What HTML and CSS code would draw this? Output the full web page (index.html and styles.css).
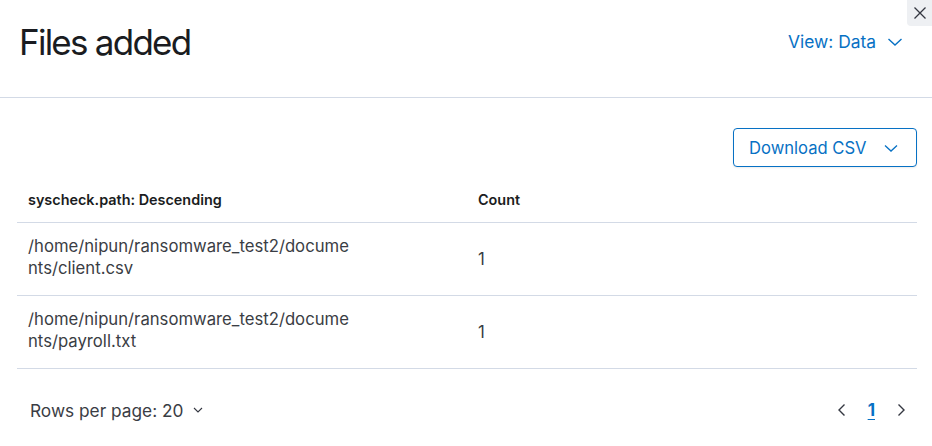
FILE: index.html
```html
<!DOCTYPE html>
<html>
<head>
<meta charset="utf-8">
<link rel="stylesheet" href="styles.css">
</head>
<body>
<div class="flyout">
  <button class="close" aria-label="Close">
    <svg width="14" height="14" viewBox="0 0 14 14"><path d="M1.5 1.5 L12.5 12.5 M12.5 1.5 L1.5 12.5" stroke="#343741" stroke-width="1.3" fill="none"/></svg>
  </button>
  <header class="head">
    <h1 class="title">Files added</h1>
    <div class="view">View: Data
      <svg class="chev" width="16" height="16" viewBox="0 0 16 16"><path d="M1.5 5 L8 11 L14.5 5" stroke="#0771c4" stroke-width="1.4" fill="none"/></svg>
    </div>
  </header>
  <main class="body">
    <div class="toolbar">
      <button class="dl">Download CSV
        <svg class="chev" width="14" height="14" viewBox="0 0 14 14"><path d="M1 4.5 L7 10 L13 4.5" stroke="#0771c4" stroke-width="1.3" fill="none"/></svg>
      </button>
    </div>
    <table class="tbl">
      <thead>
        <tr><th class="c1">syscheck.path: Descending</th><th class="c2">Count</th><th class="c3"></th></tr>
      </thead>
      <tbody>
        <tr><td class="c1"><div class="path">/home/nipun/ransomware_test2/documents/client.csv</div></td><td class="c2">1</td><td class="c3"></td></tr>
        <tr><td class="c1"><div class="path">/home/nipun/ransomware_test2/documents/payroll.txt</div></td><td class="c2">1</td><td class="c3"></td></tr>
      </tbody>
    </table>
    <div class="pager">
      <div class="rpp">Rows per page: 20
        <svg width="12" height="12" viewBox="0 0 12 12"><path d="M2 4 L6 8 L10 4" stroke="#343741" stroke-width="1.1" fill="none"/></svg>
      </div>
      <div class="pages">
        <svg width="16" height="16" viewBox="0 0 16 16"><path d="M10.5 2.5 L5 8 L10.5 13.5" stroke="#343741" stroke-width="1.4" fill="none"/></svg>
        <span class="pg">1</span>
        <svg width="16" height="16" viewBox="0 0 16 16"><path d="M5.5 2.5 L11 8 L5.5 13.5" stroke="#343741" stroke-width="1.4" fill="none"/></svg>
      </div>
    </div>
  </main>
</div>
</body>
</html>
```
FILE: styles.css
```css
* { box-sizing: border-box; }
html, body { margin: 0; padding: 0; background: #fff; }
body { font-family: Inter, "Noto Sans", sans-serif; color: #3a3d44; width: 932px; height: 446px; overflow: hidden; }
.flyout { position: relative; }
.close {
  position: absolute; top: 0; right: 0; width: 25px; height: 26px;
  background: #eef0f3; border: 0; border-radius: 0 0 0 4px; padding: 0;
  display: flex; align-items: center; justify-content: center;
}
.head {
  height: 98px; border-bottom: 1px solid #d3dae6;
  display: flex; align-items: center; justify-content: space-between;
  padding: 0 29px 0 19px;
}
.title { margin: 0; font-size: 35px; font-weight: 400; color: #1a1c21; line-height: 42px; letter-spacing: -1.75px; margin-top: -14px; }
.view { color: #0771c4; font-size: 17.4px; display: flex; align-items: center; gap: 11px; margin-top: -14px; }
.chev { display: block; }
.body { padding: 30px 15px 0 17px; }
.toolbar { display: flex; justify-content: flex-end; }
.dl {
  width: 184px; height: 39px; border: 1px solid #0771c4; border-radius: 4px; background: #fff;
  color: #0771c4; font: 400 16.6px Inter, sans-serif; display: flex; align-items: center; gap: 17px;
  padding: 0 0 0 15px; box-shadow: 0 1px 2px rgba(0,0,0,0.08);
}
.tbl { width: 100%; border-collapse: collapse; margin-top: 10px; }
.tbl th { font-size: 14.4px; font-weight: 600; color: #1a1c21; text-align: left; height: 43px; padding: 0 8px 1px; border-bottom: 1px solid #d3dae6; }
.tbl td { font-size: 16.7px; line-height: 22px; padding: 12px 8px 16px; border-bottom: 1px solid #d3dae6; vertical-align: middle; }
.tbl .c1 { width: 453px; padding-left: 11px; }
.tbl .c2 { width: 120px; padding-top: 14px; padding-bottom: 14px; }
.path { width: 328px; word-break: break-all; }
.pager { display: flex; justify-content: space-between; align-items: center; height: 24px; margin-top: 29px; padding: 0 8px 0 13px; }
.rpp { font-size: 17.3px; display: flex; align-items: center; gap: 9px; }
.pages { display: flex; align-items: center; gap: 18px; }
.pg { color: #0771c4; font-weight: 700; font-size: 17px; text-decoration: underline; text-underline-offset: 3px; }
```
